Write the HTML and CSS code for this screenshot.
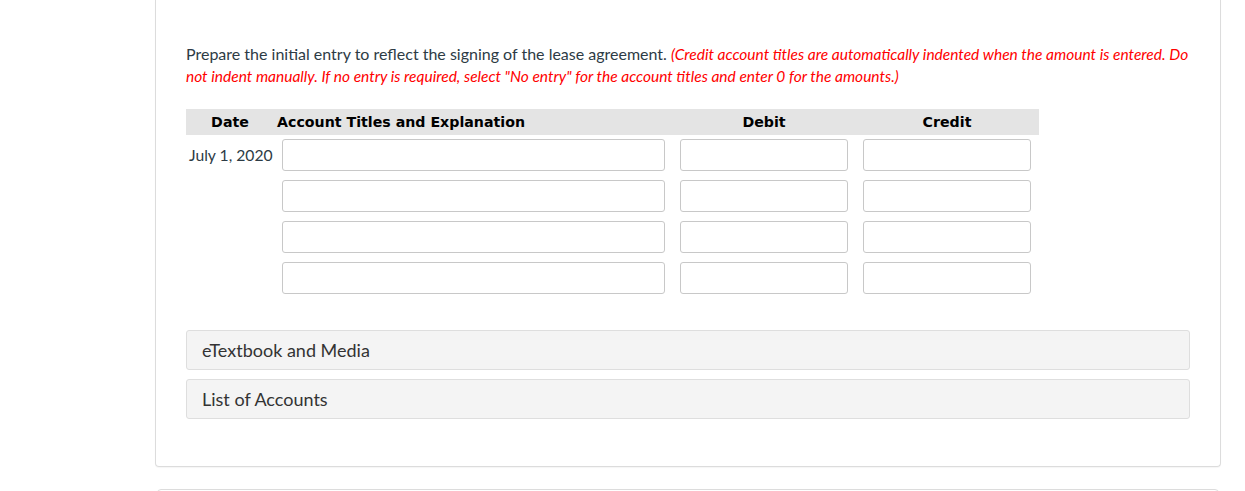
FILE: index.html
```html
<!DOCTYPE html>
<html>
<head>
<meta charset="utf-8">
<link rel="stylesheet" href="styles.css">
</head>
<body>
<div class="page">
  <div class="card">
    <p class="prompt"><span class="lead">Prepare the initial entry to reflect the signing of the lease agreement.</span> <em class="note">(Credit account titles are automatically indented when the amount is entered. Do not indent manually. If no entry is required, select "No entry" for the account titles and enter 0 for the amounts.)</em></p>
    <div class="journal">
      <div class="jrow head">
        <div class="h-date">Date</div>
        <div class="h-acct">Account Titles and Explanation</div>
        <div class="h-amt">Debit</div>
        <div class="h-amt">Credit</div>
      </div>
      <div class="jrow">
        <div class="date">July 1, 2020</div>
        <div class="cell"><input class="in acct" type="text"></div>
        <div class="cell"><input class="in amt" type="text"></div>
        <div class="cell"><input class="in amt" type="text"></div>
      </div>
      <div class="jrow">
        <div class="date"></div>
        <div class="cell"><input class="in acct" type="text"></div>
        <div class="cell"><input class="in amt" type="text"></div>
        <div class="cell"><input class="in amt" type="text"></div>
      </div>
      <div class="jrow">
        <div class="date"></div>
        <div class="cell"><input class="in acct" type="text"></div>
        <div class="cell"><input class="in amt" type="text"></div>
        <div class="cell"><input class="in amt" type="text"></div>
      </div>
      <div class="jrow">
        <div class="date"></div>
        <div class="cell"><input class="in acct" type="text"></div>
        <div class="cell"><input class="in amt" type="text"></div>
        <div class="cell"><input class="in amt" type="text"></div>
      </div>
    </div>
    <div class="panels">
      <div class="panel">eTextbook and Media</div>
      <div class="panel">List of Accounts</div>
    </div>
  </div>
  <div class="card next"></div>
</div>
</body>
</html>
```

FILE: styles.css
```css
html, body {
  margin: 0;
  padding: 0;
  background: #fff;
}
body {
  font-family: Lato, "Open Sans", sans-serif;
  color: #2d3b45;
}
.page {
  padding-left: 155px;
  width: 1066px;
}
.card {
  border: 1px solid #dcdcdc;
  border-top: none;
  border-radius: 0 0 4px 4px;
  padding: 43px 30px 47px 30px;
  box-shadow: 0 1px 1px rgba(0,0,0,0.04);
}
.card.next {
  margin: 22px 2px 0 2px;
  border-top: 1px solid #dcdcdc;
  border-radius: 4px 4px 0 0;
  padding: 0;
  height: 20px;
}
.prompt {
  margin: 0;
  font-size: 16px;
  line-height: 22px;
  color: #2d3b45;
}
.lead {
  color: #2d3b45;
}
.note {
  color: #f00;
  font-style: italic;
  font-size: 15.5px;
}
.journal {
  margin-top: 22px;
  width: 853px;
}
.jrow {
  display: grid;
  grid-template-columns: 96px 398px 183px 176px;
  height: 32px;
  margin-top: 9px;
  align-items: center;
}
.jrow.head {
  margin-top: 0;
  margin-bottom: -5px;
  height: 26px;
  background: #e4e4e4;
  font-family: "DejaVu Sans", Verdana, sans-serif;
  font-weight: 700;
  font-size: 14.2px;
  color: #000;
}
.h-date {
  width: 88px;
  text-align: center;
}
.h-acct {
  margin-left: -5px;
}
.h-amt {
  width: 168px;
  text-align: center;
}
.date {
  font-size: 15.7px;
  padding-left: 3px;
  color: #2d3b45;
  white-space: nowrap;
}
.in {
  box-sizing: border-box;
  height: 32px;
  border: 1px solid #c8c8c8;
  border-radius: 3px;
  background: #fff;
  margin: 0;
  padding: 0 6px;
  display: block;
}
.in.acct { width: 383px; }
.in.amt { width: 168px; }
.panels {
  margin-top: 36px;
  display: flex;
  flex-direction: column;
  gap: 9px;
}
.panel {
  box-sizing: border-box;
  height: 40px;
  background: #f4f4f4;
  border: 1px solid #dedede;
  border-radius: 3px;
  padding-left: 15px;
  display: flex;
  align-items: center;
  font-size: 18px;
  color: #333;
}
```
